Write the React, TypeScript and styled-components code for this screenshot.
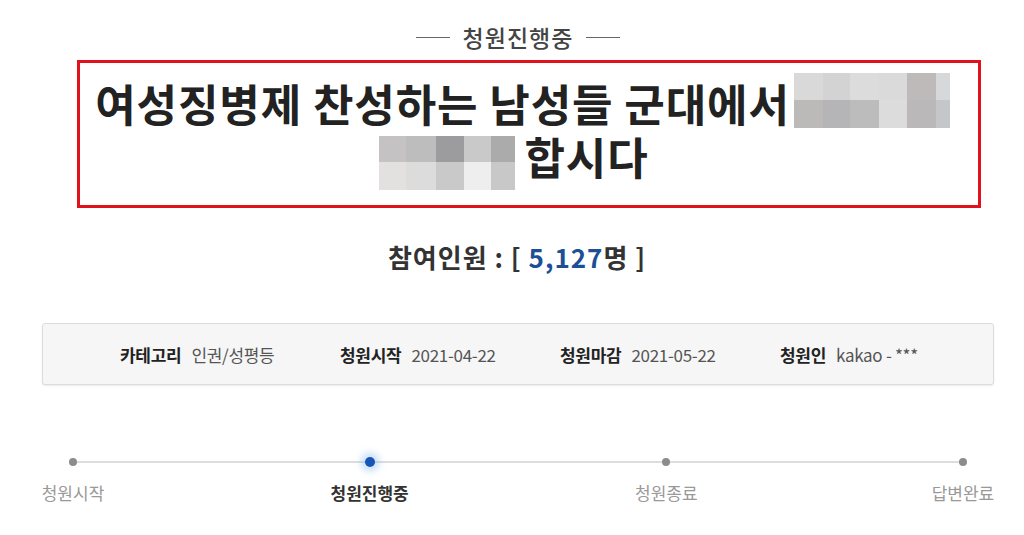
import styled, { createGlobalStyle } from "styled-components";

const GlobalStyle = createGlobalStyle`
  body {
    margin: 0;
    background: #fff;
    font-family: "Noto Sans CJK KR", "Noto Sans", sans-serif;
  }
`;

const Page = styled.div`
  width: 1024px;
  height: 535px;
  display: flex;
  flex-direction: column;
  align-items: flex-start;
  padding-top: 23px;
  box-sizing: border-box;
  overflow: hidden;
`;

const Status = styled.div`
  align-self: center;
  display: flex;
  align-items: center;
  gap: 13px;
  margin-left: 12px;
  font-size: 23px;
  font-weight: 500;
  letter-spacing: 1px;
  color: #444;
  line-height: 28px;
  &::before,
  &::after {
    content: "";
    width: 34px;
    height: 1px;
    background: #666;
  }
`;

const TitleBox = styled.div`
  margin: 9px 0 0 77px;
  width: 904px;
  height: 148px;
  box-sizing: border-box;
  border: 3px solid #e1121c;
  padding-top: 14px;
  overflow: hidden;
`;

const Title = styled.h2`
  margin: 0;
  text-align: center;
  font-size: 44px;
  font-weight: 700;
  letter-spacing: 0.9px;
  line-height: 53px;
  color: #222;
`;

const TitleLine = styled.span<{ $pr: number }>`
  display: block;
  padding-right: ${(p) => p.$pr}px;
`;

const Mosaic = styled.span<{ $cols: string; $rows: string; $ml: number; $mr: number; $mt: number }>`
  display: inline-grid;
  grid-template-columns: ${(p) => p.$cols};
  grid-template-rows: ${(p) => p.$rows};
  vertical-align: top;
  margin: ${(p) => p.$mt}px ${(p) => p.$mr}px 0 ${(p) => p.$ml}px;
`;

const Cell = styled.span<{ $c: string }>`
  background: ${(p) => p.$c};
`;

const Count = styled.div`
  align-self: center;
  margin: 33px 0 0 10px;
  font-size: 26px;
  font-weight: 700;
  color: #333;
  letter-spacing: 1px;
  line-height: 32px;
`;

const Num = styled.span`
  color: #1c4f95;
`;

const InfoBox = styled.div`
  margin: 50px 0 0 42px;
  width: 952px;
  height: 62px;
  box-sizing: border-box;
  background: #f6f6f6;
  border: 1px solid #dcdcdc;
  border-radius: 3px;
  box-shadow: 0 1px 2px rgba(0, 0, 0, 0.08);
  display: grid;
  grid-template-columns: repeat(4, 220px);
  align-items: center;
  padding-left: 77px;
`;

const InfoItem = styled.div`
  display: flex;
  gap: 10px;
  font-size: 17px;
  letter-spacing: -0.3px;
  white-space: nowrap;
`;

const InfoLabel = styled.span`
  font-weight: 700;
  color: #222;
`;

const InfoValue = styled.span`
  color: #555;
`;

const Steps = styled.div`
  position: relative;
  margin: 71px 0 0 42px;
  width: 952px;
  display: flex;
  justify-content: space-between;
  &::before {
    content: "";
    position: absolute;
    left: 31px;
    right: 31px;
    top: 5px;
    height: 2px;
    background: #ddd;
  }
`;

const Step = styled.div`
  position: relative;
  width: 62px;
  display: flex;
  flex-direction: column;
  align-items: center;
  gap: 14px;
`;

const Dot = styled.span<{ $active?: boolean }>`
  width: ${(p) => (p.$active ? 10 : 8)}px;
  height: ${(p) => (p.$active ? 10 : 8)}px;
  margin-top: ${(p) => (p.$active ? 1 : 2)}px;
  border-radius: 50%;
  background: ${(p) => (p.$active ? "#1656b8" : "#8c8c8c")};
  box-shadow: ${(p) =>
    p.$active ? "0 0 6px 5px rgba(120, 175, 235, 0.35)" : "none"};
`;

const StepLabel = styled.span<{ $active?: boolean }>`
  white-space: nowrap;
  font-size: 17px;
  letter-spacing: 0;
  font-weight: ${(p) => (p.$active ? 700 : 400)};
  color: ${(p) => (p.$active ? "#333" : "#999")};
  margin-top: ${(p) => (p.$active ? -1 : 0)}px;
`;

const mosaicA = [
  "#d9d9d9", "#d3d3d3", "#dcdcdc", "#dadada", "#bdbab9", "#d6d8da",
  "#bcbab9", "#b5b5b7", "#bcbcbc", "#dcdcdc", "#bab8b8", "#c4c6c8",
];
const mosaicB = [
  "#c4c2c2", "#bdbdbd", "#9c9c9e", "#c9c9c9", "#ababab",
  "#e3e1e0", "#dcdcdc", "#c9c9c9", "#eeeeee", "#c8c8c8",
];

const info = [
  ["카테고리", "인권/성평등"],
  ["청원시작", "2021-04-22"],
  ["청원마감", "2021-05-22"],
  ["청원인", "kakao - ***"],
];

const steps = ["청원시작", "청원진행중", "청원종료", "답변완료"];

export default function App() {
  return (
    <Page>
      <GlobalStyle />
      <Status>청원진행중</Status>
      <TitleBox>
        <Title>
          <TitleLine $pr={13}>
            여성징병제 찬성하는 남성들 군대에서
            <Mosaic $cols="29px 27px 29px 28px 29px 14px" $rows="27px 28px" $ml={4} $mr={0} $mt={-4}>
              {mosaicA.map((c, i) => (
                <Cell key={i} $c={c} />
              ))}
            </Mosaic>
          </TitleLine>
          <TitleLine $pr={30}>
            <Mosaic $cols="27px 30px 28px 27px 24px" $rows="26px 28px" $ml={0} $mr={9} $mt={6}>
              {mosaicB.map((c, i) => (
                <Cell key={i} $c={c} />
              ))}
            </Mosaic>
            합시다
          </TitleLine>
        </Title>
      </TitleBox>
      <Count>
        참여인원 : [ <Num>5,127</Num>명 ]
      </Count>
      <InfoBox>
        {info.map(([label, value]) => (
          <InfoItem key={label}>
            <InfoLabel>{label}</InfoLabel>
            <InfoValue>{value}</InfoValue>
          </InfoItem>
        ))}
      </InfoBox>
      <Steps>
        {steps.map((s, i) => (
          <Step key={s}>
            <Dot $active={i === 1} />
            <StepLabel $active={i === 1}>{s}</StepLabel>
          </Step>
        ))}
      </Steps>
    </Page>
  );
}
